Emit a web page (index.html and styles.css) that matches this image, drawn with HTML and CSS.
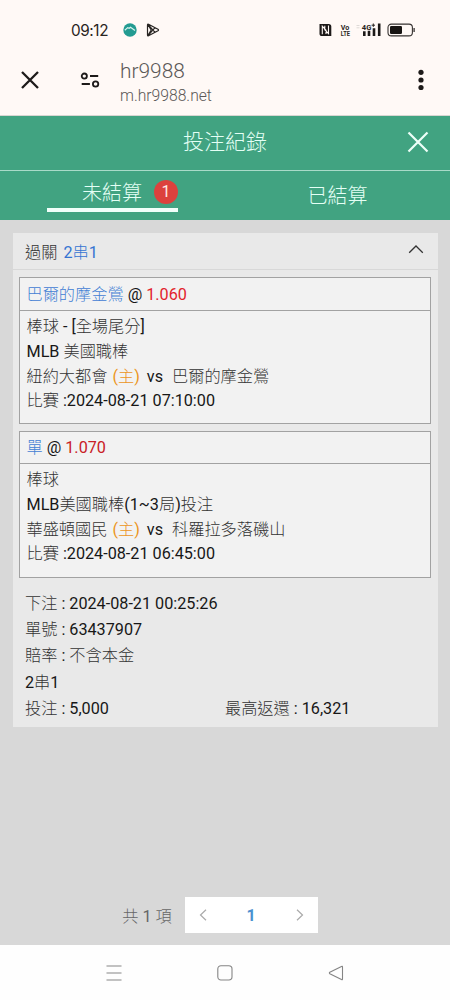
FILE: index.html
```html
<!DOCTYPE html>
<html lang="zh-Hant">
<head>
<meta charset="utf-8">
<title>投注紀錄</title>
<link rel="stylesheet" href="styles.css">
</head>
<body>
<div class="phone">
  <div class="status">
    <span class="clock">09:12</span>
    <svg class="app" width="14" height="14" viewBox="0 0 14 14"><circle cx="7" cy="7" r="6.7" fill="#239b91"/><path d="M1.8 7.2 4.7 4.6 6.2 5.3 7.5 4.3 12 7.4" fill="none" stroke="#d6f3ee" stroke-width="1.2"/></svg>
    <svg class="play" width="14" height="14" viewBox="0 0 14 14"><path d="M1.5 1.9Q1.5.7 2.5 1.2L12 6.3Q13 7 12 7.7L2.5 12.8Q1.5 13.3 1.5 12.1ZM2 1.4 9 9.3M2 12.6 9 4.7M2 12.4 5.2 7 2 1.6" fill="none" stroke="#282522" stroke-width="1.2" stroke-linejoin="round"/></svg>
    <svg class="indicators" width="98" height="16" viewBox="0 0 98 16">
      <path d="M.5 2h9.2q2.6 0 2.6 2.6V14H3.1Q.5 14 .5 11.4Z" fill="#1d1a19"/>
      <path d="M3.3 12.2V4.2L7 8.3v3.6M9.5 3.6v8.1L5.8 7.7V3.8" fill="none" stroke="#fff8f5" stroke-width="1.1"/>
      <text class="tiny" x="21.8" y="7.5" textLength="8.5" lengthAdjust="spacingAndGlyphs">Vo</text>
      <text class="tiny" x="21.8" y="14" textLength="9.2" lengthAdjust="spacingAndGlyphs">LTE</text>
      <path d="M37.5 3.5h3M37.5 5.8h3" stroke="#dedad7"/>
      <text class="tiny net" x="42.8" y="7.6" textLength="9.6" lengthAdjust="spacingAndGlyphs">4G</text>
      <path d="M52.6 3.2h3.4M54.3 1.5v3.4" stroke="#292522"/>
      <path d="M45.3 9.3V14M50 8.7V14M55 6.2V14M60.2 1.5V14" stroke="#1d1a19" stroke-width="2.6"/>
      <rect x="69" y="2.1" width="24.4" height="11.8" rx="3.4" fill="none" stroke="#35312f" stroke-width="1.1"/>
      <rect x="71" y="4" width="12" height="8" rx="1.2" fill="#171412"/>
      <path d="M95.1 6v4" stroke="#35312f" stroke-width="1.3"/>
    </svg>
  </div>
  <div class="toolbar">
    <svg class="tb-close" width="20" height="20" viewBox="0 0 20 20"><path d="M2 2 18 18M18 2 2 18" stroke="#1d1a19" stroke-width="2.3"/></svg>
    <svg class="tune" width="20" height="18" viewBox="0 0 20 18"><g fill="none" stroke="#1d1a19" stroke-width="1.8"><circle cx="4.3" cy="5.1" r="2.6"/><path d="M10 5h8.2M1.7 13h8.2"/><circle cx="15.6" cy="13" r="2.7"/></g></svg>
    <div class="site"><div class="site-name">hr9988</div><div class="site-url">m.hr9988.net</div></div>
    <svg class="more" width="6" height="22" viewBox="0 0 6 22"><g fill="#1d1a19"><circle cx="3" cy="3.3" r="2.6"/><circle cx="3" cy="11" r="2.6"/><circle cx="3" cy="18.5" r="2.6"/></g></svg>
  </div>
  <header class="title">
    <h1>投注紀錄</h1>
    <svg width="22" height="22" viewBox="0 0 22 22"><path d="M1.5 1.5 20.5 20.5M20.5 1.5 1.5 20.5" stroke="#eefff9" stroke-width="2.2"/></svg>
  </header>
  <nav class="tabs">
    <div class="tab"><div class="active"><span>未結算</span><b>1</b></div></div>
    <div class="tab second"><span>已結算</span></div>
  </nav>
  <main>
    <section class="panel">
      <div class="panel-head"><div><i>過關</i> <span class="blue">2<i>串</i>1</span></div>
        <svg width="16" height="10" viewBox="0 0 16 10"><path d="M1.2 8.7 8 2l6.8 6.7" fill="none" stroke="#333" stroke-width="1.3"/></svg></div>
      <div class="cards">
        <article class="card">
          <div class="card-head"><i class="team">巴爾的摩金鶯</i> @ <span class="odds">1.060</span></div>
          <div class="card-body">
            <p><i>棒球</i> - [<i>全場尾分</i>]</p>
            <p>MLB <i>美國職棒</i></p>
            <p><i>紐約大都會</i> <span class="home">(<i>主</i>)</span><span class="vs">vs</span><i>巴爾的摩金鶯</i></p>
            <p><i>比賽</i> :2024-08-21 07:10:00</p>
          </div>
        </article>
        <article class="card">
          <div class="card-head"><i class="team">單</i> @ <span class="odds dark">1.070</span></div>
          <div class="card-body">
            <p><i>棒球</i></p>
            <p>MLB<i>美國職棒</i>(1~3<i>局</i>)<i>投注</i></p>
            <p><i>華盛頓國民</i> <span class="home">(<i>主</i>)</span><span class="vs">vs</span><i>科羅拉多落磯山</i></p>
            <p><i>比賽</i> :2024-08-21 06:45:00</p>
          </div>
        </article>
      </div>
      <div class="summary">
        <p><i>下注</i> : 2024-08-21 00:25:26</p>
        <p><i>單號</i> : 63437907</p>
        <p><i>賠率</i> : <i>不含本金</i></p>
        <p>2<i>串</i>1</p>
        <div class="money"><p><i>投注</i> : 5,000</p><p><i>最高返還</i> : 16,321</p></div>
      </div>
    </section>
    <div class="pagination">
      <span class="count"><i>共</i> 1 <i>項</i></span>
      <div class="pager">
        <svg width="8" height="12" viewBox="0 0 8 12"><path d="M7 .8 1.5 6 7 11.2" fill="none" stroke="#aaa" stroke-width="1.2"/></svg>
        <b>1</b>
        <svg width="8" height="12" viewBox="0 0 8 12"><path d="M1 .8 6.5 6 1 11.2" fill="none" stroke="#aaa" stroke-width="1.2"/></svg>
      </div>
    </div>
  </main>
  <div class="navbar">
    <svg width="16" height="16" viewBox="0 0 16 16"><path d="M.5 1h15M.5 8h15M.5 15h15" stroke="#858585" stroke-width="1.1"/></svg>
    <svg width="16" height="16" viewBox="0 0 16 16"><rect x=".8" y=".8" width="14.2" height="14.2" rx="3.2" fill="none" stroke="#858585" stroke-width="1.1"/></svg>
    <svg width="16" height="16" viewBox="0 0 16 16"><path d="M14.5 2v12q0 1.2-1 .6L1.8 8.7Q.9 8 1.8 7.3L13.5 1.4q1-.5 1 .6Z" fill="none" stroke="#858585" stroke-width="1.1"/></svg>
  </div>
</div>
</body>
</html>
```

FILE: styles.css
```css
* { box-sizing: border-box; }
body { margin: 0; font-family: Roboto, "Noto Sans CJK TC", sans-serif; font-size: 16.2px; color: #171717; }
p, h1 { margin: 0; }
svg { display: block; flex: none; }
i { font-style: normal; font-weight: 300; color: #333; }
.phone { width: 450px; height: 1000px; display: flex; flex-direction: column; overflow: hidden; background: #fff; }

.status { height: 50px; padding: 10px 33px 0 71px; display: flex; align-items: center; background: #fff9f6; }
.clock { font-family: Inter, sans-serif; font-size: 15.3px; letter-spacing: -.4px; width: 52px; color: #292522; white-space: nowrap; }
.play { margin-left: 9px; }
.indicators { margin-left: auto; }
.tiny { font: 700 7px Roboto, sans-serif; fill: #292522; }
.net { font-size: 8px; }
.toolbar { height: 66px; padding: 0 26px 7px 20px; display: flex; align-items: center; background: #fff9f6; border-bottom: 1px solid #d8d6d2; }
.tb-close { margin-top: 2px; }
.tune { margin: 2px 0 0 40px; }
.site { margin: 7px 0 0 20px; font-weight: 300; color: #5b5857; }
.site-name { font-size: 20.9px; line-height: 26px; }
.site-url { font-size: 15.7px; line-height: 24px; }
.more { margin: 2px 0 0 auto; }

.title { height: 55px; flex: none; display: grid; grid-template-columns: 1fr 184px; background: #41a381; border-bottom: 1px solid #a9dac8; }
.title h1 { padding-left: 183px; font-size: 21px; line-height: 53px; font-weight: 300; color: #e4fff5; white-space: nowrap; }
.title svg { margin: 15px 0 0 140px; }
.tabs { height: 49px; flex: none; display: grid; grid-template-columns: 225px 225px; background: #41a381; color: #e4fff5; font-size: 20px; font-weight: 300; }
.active { width: 131px; height: 41px; margin-left: 47px; padding-left: 35px; border-bottom: 4px solid #f1fffa; display: flex; align-items: center; gap: 12px; }
.active span { line-height: 37px; padding-top: 7px; }
.active b { width: 24px; height: 24px; border-radius: 50%; margin-top: 5px; background: #dc413d; color: #ffe9e5; font-size: 16px; font-weight: 400; line-height: 24px; text-align: center; }
.second { text-align: center; line-height: 51px; }

main { height: 725px; flex: none; padding: 13px 12px 12px; background: #d8d8d8; display: flex; flex-direction: column; }
.panel { height: 494px; background: #e9e9e9; margin: 0 .5px; }
.panel-head { height: 37px; padding: 0 14px 0 12.5px; display: flex; align-items: center; justify-content: space-between; border-bottom: 1px solid #d8d8d8; word-spacing: 2px; }
.panel-head > div { margin-top: -1px; }
.panel-head svg { margin-top: -4px; }
.blue, .blue i { color: #3574d2; }
.cards { padding: 7px 6.5px 0; display: grid; gap: 7px; }
.card { height: 147px; border: 1px solid #a2a2a2; background: #f2f2f2; }
.card-head { height: 33px; padding-left: 6.5px; line-height: 33px; border-bottom: 1px solid #a2a2a2; }
.card + .card .card-head { height: 32px; line-height: 32px; }
.card .team { color: #4380d4; }
.odds { color: #e2232c; }
.dark { color: #c92026; }
.card-body { padding: 4px 6.5px; line-height: 24.8px; }
.home { margin-left: 1px; }
.home, .home i { color: #ec951c; }
.vs { margin: 0 9px 0 7px; }
.summary { padding: 13px 12.5px 0; line-height: 26.2px; }
.money { display: grid; grid-template-columns: 200px 1fr; }
.pagination { margin-top: auto; height: 36px; padding-right: 10px; display: flex; align-items: center; justify-content: center; gap: 13px; }
.pagination .count { color: #666; }
.count i { color: #666; }
.pager { width: 133px; height: 36px; padding: 0 14px; display: flex; align-items: center; justify-content: space-between; background: #fff; color: #4b91d0; }
.pager b { font-weight: 700; }
.navbar { flex: 1; display: flex; align-items: center; gap: 95px; padding: 0 0 0 106px; background: #fefefe; }
```
